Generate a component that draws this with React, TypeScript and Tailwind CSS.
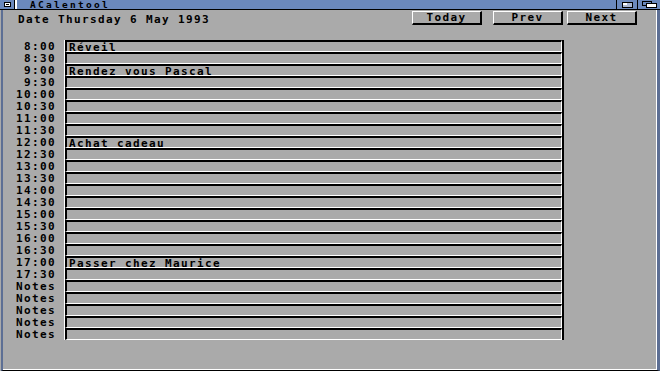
import React from 'react';

const rows: [string, string][] = [
  ['8:00', 'Réveil'],
  ['8:30', ''],
  ['9:00', 'Rendez vous Pascal'],
  ['9:30', ''],
  ['10:00', ''],
  ['10:30', ''],
  ['11:00', ''],
  ['11:30', ''],
  ['12:00', 'Achat cadeau'],
  ['12:30', ''],
  ['13:00', ''],
  ['13:30', ''],
  ['14:00', ''],
  ['14:30', ''],
  ['15:00', ''],
  ['15:30', ''],
  ['16:00', ''],
  ['16:30', ''],
  ['17:00', 'Passer chez Maurice'],
  ['17:30', ''],
  ['Notes', ''],
  ['Notes', ''],
  ['Notes', ''],
  ['Notes', ''],
  ['Notes', ''],
];

// topaz-like: 8px per character
const topaz = "font-['DejaVu_Sans_Mono',monospace] font-bold text-[11px] tracking-[1.38px] leading-[11px]";

const Button: React.FC<{ label: string }> = ({ label }) => (
  <div className="w-[70px] h-[14px] flex items-center justify-center border-t border-l border-white border-r-2 border-b-2 border-r-black border-b-black bg-[#aaaaaa]">
    <span className={topaz + ' text-black'}>{label}</span>
  </div>
);

const App: React.FC = () => {
  return (
    <div className="w-[660px] h-[371px] bg-[#aaaaaa] flex flex-col overflow-hidden">
      {/* title bar */}
      <div className="h-[10px] flex bg-[#6b89bd] border-b border-black">
        <div className="w-[14px] flex items-center justify-center">
          <div className="w-[7px] h-[5px] bg-white border border-black flex items-center justify-center">
            <div className="w-[3px] h-[1px] bg-black" />
          </div>
        </div>
        <div className="w-[1px] bg-black" />
        <div className="w-[2px] bg-white" />
        <div className="flex-1 pl-[13px] flex items-center">
          <span className={"font-['DejaVu_Sans_Mono',monospace] font-bold text-[9.5px] tracking-[2.28px] leading-[9px] text-black"}>ACalentool</span>
        </div>
        <div className="w-[1px] bg-black" />
        <div className="w-[20px] flex items-center justify-center">
          <div className="w-[11px] h-[6px] bg-[#aab8d4] border border-black relative">
            <div className="absolute left-0 top-0 w-[4px] h-[2px] bg-white" />
          </div>
        </div>
        <div className="w-[1px] bg-black" />
        <div className="w-[22px] flex items-center justify-center">
          <div className="relative w-[15px] h-[7px]">
            <div className="absolute left-0 top-0 w-[10px] h-[5px] border border-black bg-[#6b89bd]" />
            <div className="absolute left-[4px] top-[2px] w-[11px] h-[5px] border border-black bg-white" />
          </div>
        </div>
      </div>

      {/* body */}
      <div className="flex-1 flex ml-[1px] border-l-[2px] border-l-[#5d6f94] border-r-[3px] border-r-[#5d6f94] border-b border-b-black">
        <div className="flex-1 flex flex-col border-r border-b border-white">
          <div className="flex items-start h-[16px] mt-[1px] pl-[15px]">
            <span className={topaz + ' text-black mt-[3px]'}>Date Thursday 6 May 1993</span>
            <div className="flex-1" />
            <div className="flex mr-[19px]">
              <Button label="Today" />
              <div className="w-[11px]" />
              <Button label="Prev" />
              <div className="w-[4px]" />
              <Button label="Next" />
            </div>
          </div>

          <div className="flex mt-[13px]">
            <div className="w-[53px] flex flex-col">
              {rows.map(([t], i) => (
                <div key={i} className="h-[12px] flex items-center justify-end pt-[1px]">
                  <span className={topaz + ' text-black'}>{t}</span>
                </div>
              ))}
            </div>
            <div className="ml-[8px] w-[500px] flex flex-col border-l border-white border-r-2 border-r-black">
              {rows.map(([, v], i) => (
                <div
                  key={i}
                  className="h-[12px] flex items-center border-t-2 border-t-black border-l-2 border-l-black border-b border-b-white border-r border-r-white bg-[#aaaaaa] pl-[2px] pt-[1px]"
                >
                  <span className={topaz + ' text-black'}>{v}</span>
                </div>
              ))}
            </div>
          </div>
        </div>
      </div>
    </div>
  );
};

export default App;
